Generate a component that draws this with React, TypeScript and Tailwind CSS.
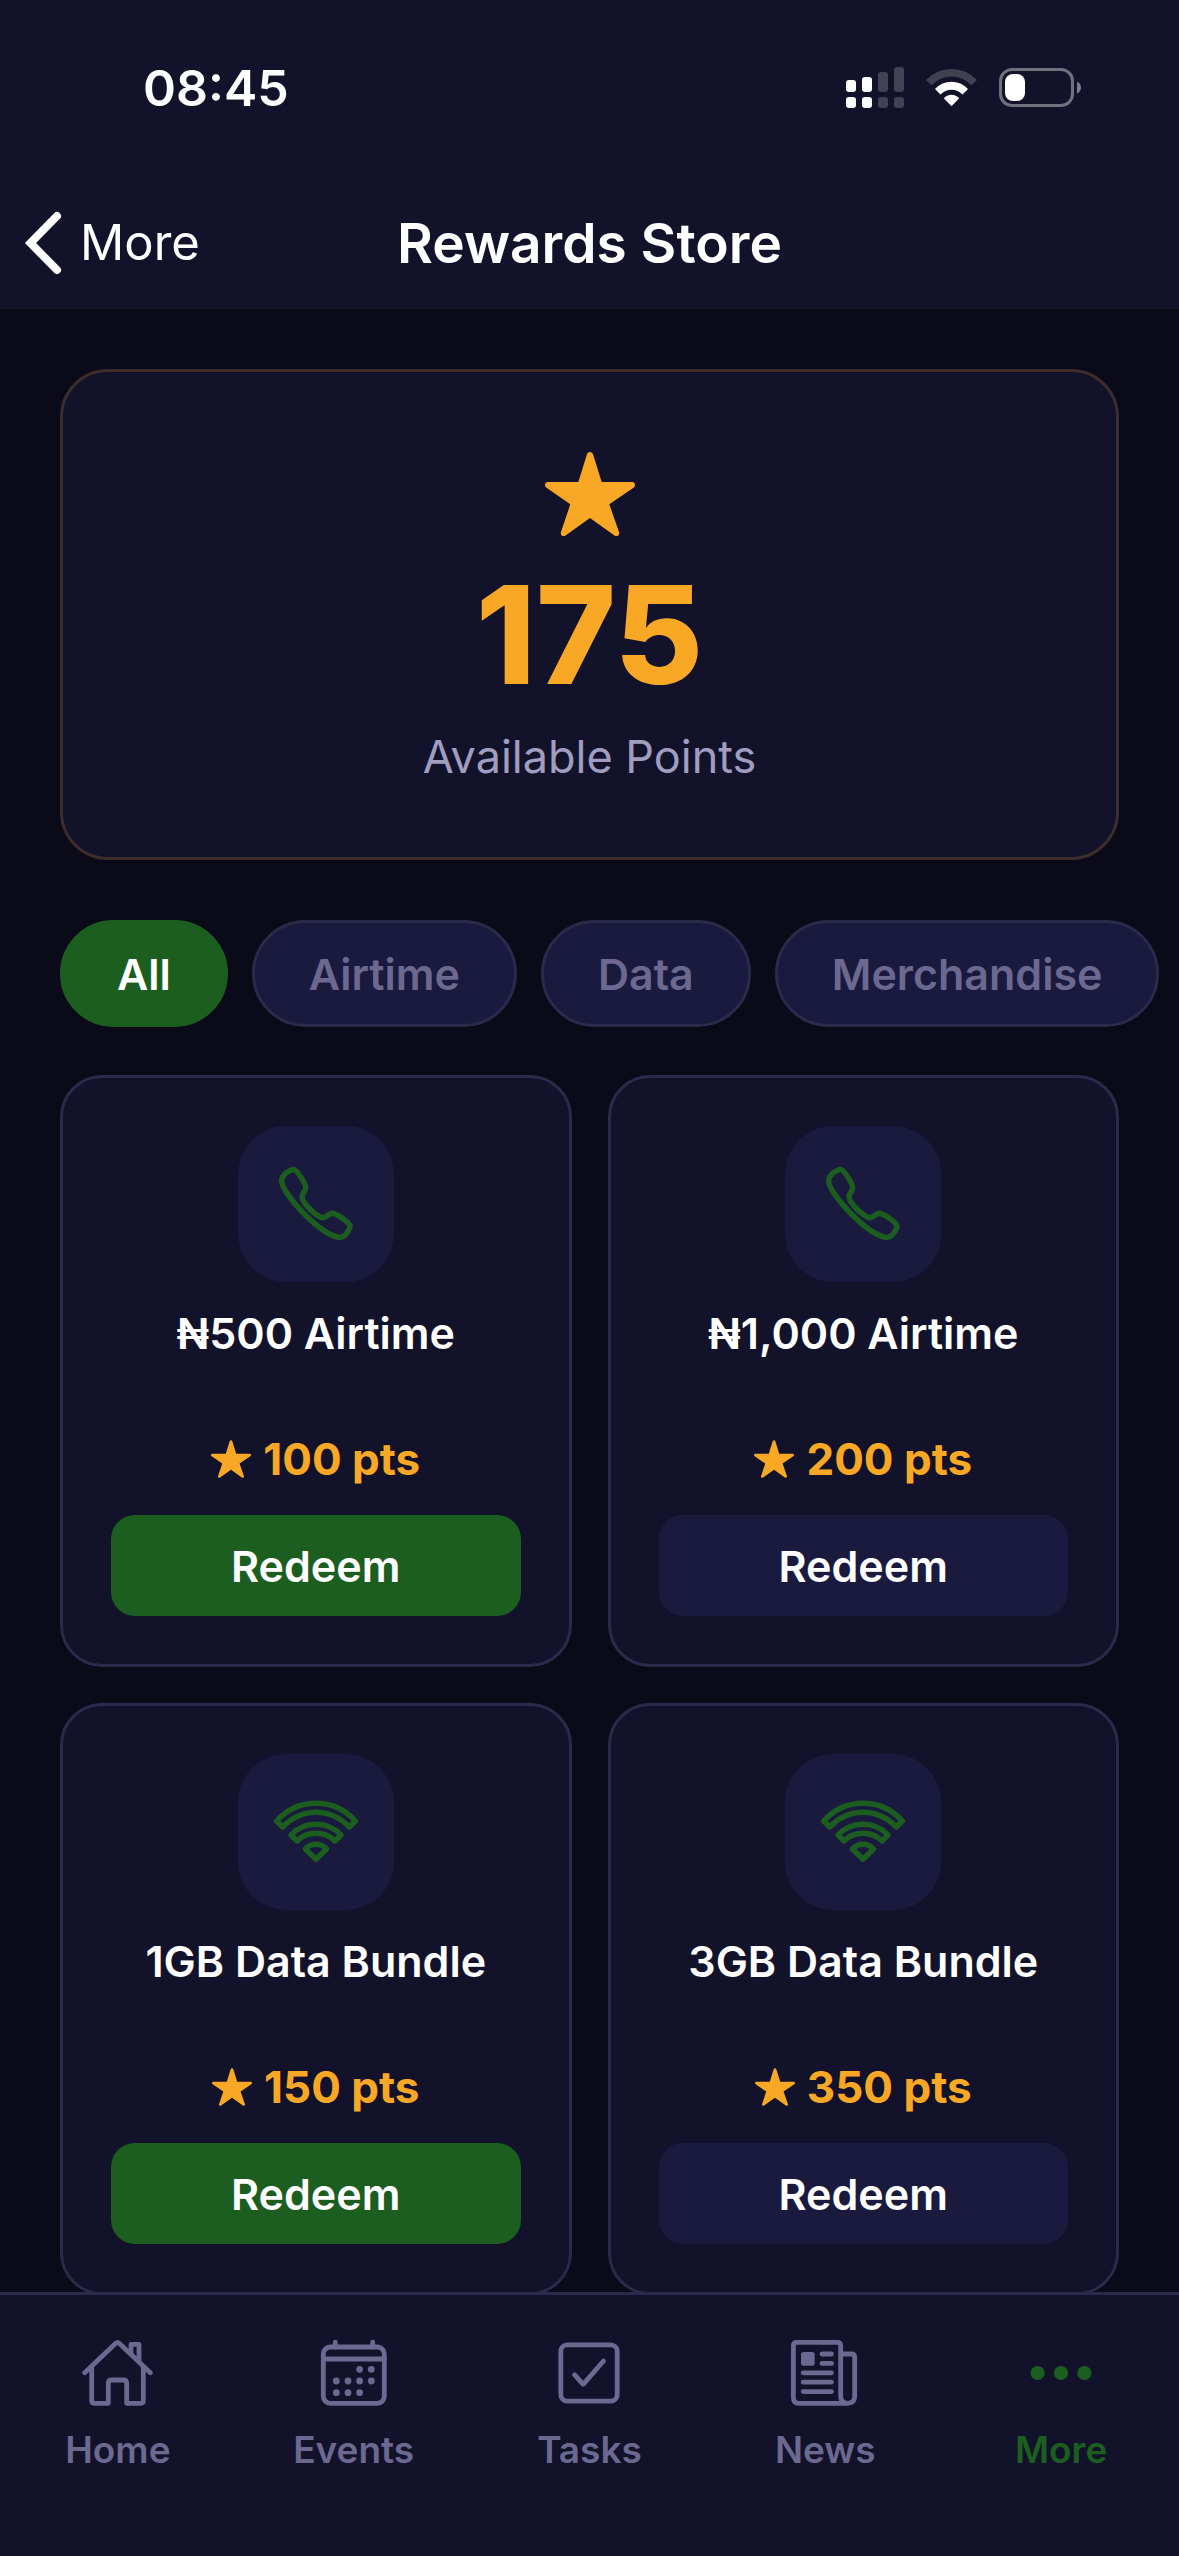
import React from 'react';

type IconName = 'phone' | 'wifi';

interface Reward {
  id: string;
  title: string;
  points: number;
  icon: IconName;
}

const AVAILABLE_POINTS = 175;

const categories = ['All', 'Airtime', 'Data', 'Merchandise'];

const rewards: Reward[] = [
  { id: 'airtime-500', title: '₦500 Airtime', points: 100, icon: 'phone' },
  { id: 'airtime-1000', title: '₦1,000 Airtime', points: 200, icon: 'phone' },
  { id: 'data-1gb', title: '1GB Data Bundle', points: 150, icon: 'wifi' },
  { id: 'data-3gb', title: '3GB Data Bundle', points: 350, icon: 'wifi' },
];

const StarIcon: React.FC<{ className: string }> = ({ className }) => (
  <svg viewBox="0 0 90 84" className={className} fill="currentColor" aria-hidden="true">
    <path d="M42 2.2C43-.7 47-.7 48 2.2L56.7 30H87C90.3 30 91 34 88.5 35.8L64.3 52.3L74 80C75 83 72 85.3 69.5 83.5L45 66L20.5 83.5C18 85.3 15 83 16 80L25.3 52.3L1.5 35.8C-1 34-.3 30 3 30H33.3Z" />
  </svg>
);

const RewardIcon: React.FC<{ name: IconName }> = ({ name }) => (
  <svg
    viewBox="0 0 84 84"
    className="size-[84px] text-[#1b5e20]"
    fill="none"
    stroke="currentColor"
    strokeWidth="5.4"
    strokeLinejoin="round"
    aria-hidden="true"
  >
    {name === 'phone' ? (
      <path d="M19.3 7.3C15 8.5 7.7 12.5 7.7 19C8 32 46 72.5 65 75.4C71 76 74.5 69 76 65C77.5 61.5 63 51.6 58 51.3C55 51.3 52.5 55.7 49.3 55.7C43 55.7 28 41 28 34.5C28 31 32.3 28.5 31.7 25C31.2 21.5 23.5 8 19.3 7.3Z" />
    ) : (
      <>
        <path d="M2.7 31C13 19.5 27 13.3 42 13.3S71 19.5 81.3 31L75.3 37C66 27.5 54.5 22.3 42 22.3S18 27.5 8.7 37Z" />
        <path d="M17 45C23.5 38 32 34.3 42 34.3S60.5 38 67 45L61 51C56 46 49.5 43.3 42 43.3S28 46 23 51Z" />
        <path d="M31.3 59C34 56 37.5 54.3 42 54.3S50 56 52.7 59L42 69.3Z" />
      </>
    )}
  </svg>
);

const tabs = [
  {
    label: 'Home',
    icon: (
      <>
        <path d="M2.7 35.7L33.8 6.2Q35.5 4.6 37.2 6.2L68.3 35.7" />
        <path d="M9.7 29.7V63.8Q9.7 66.3 12.2 66.3H26.3V46.5Q26.3 43 29.8 43H41.2Q44.7 43 44.7 46.5V66.3H58.8Q61.3 66.3 61.3 63.8V29.7" />
        <path d="M49 17V7.3H57V24.7" />
      </>
    ),
  },
  {
    label: 'Events',
    icon: (
      <>
        <rect x="5.3" y="10" width="61" height="56.3" rx="7" />
        <path d="M5.3 22H66.3" />
        <path d="M17.3 5.2V10M54.7 5.2V10" />
        <g fill="currentColor" stroke="none">
          <circle cx="41.6" cy="32.3" r="3.4" />
          <circle cx="53.3" cy="32.3" r="3.4" />
          <circle cx="18.3" cy="44" r="3.4" />
          <circle cx="30" cy="44" r="3.4" />
          <circle cx="41.6" cy="44" r="3.4" />
          <circle cx="53.3" cy="44" r="3.4" />
          <circle cx="18.3" cy="55.7" r="3.4" />
          <circle cx="30" cy="55.7" r="3.4" />
          <circle cx="41.6" cy="55.7" r="3.4" />
        </g>
      </>
    ),
  },
  {
    label: 'Tasks',
    icon: (
      <>
        <rect x="7.8" y="7.8" width="56.4" height="56.4" rx="6.5" />
        <path d="M21.5 37.7L30.2 47.3L50.5 24" />
      </>
    ),
  },
  {
    label: 'News',
    icon: (
      <>
        <path d="M51.7 17H62.5Q65.7 17 65.7 20.2V59.3Q65.7 66.3 58.7 66.3H10Q4.4 66.3 4.4 60.5V8.5Q4.4 5.3 7.6 5.3H48.5Q51.7 5.3 51.7 8.5V59.3Q51.7 66.3 58.7 66.3" />
        <rect x="12" y="15" width="13.7" height="13.7" rx="2.5" fill="currentColor" stroke="none" />
        <path d="M33 17H42.5M33 26.4H42.5M14.2 35.8H42.5M14.2 45.2H42.5M14.2 54.6H42.5" />
      </>
    ),
  },
  {
    label: 'More',
    icon: (
      <g fill="currentColor" stroke="none">
        <circle cx="12.6" cy="36" r="7.1" />
        <circle cx="36" cy="36" r="7.1" />
        <circle cx="59.4" cy="36" r="7.1" />
      </g>
    ),
  },
];

const StatusBar: React.FC = () => (
  <div className="flex h-44 items-center justify-between pl-[143px] pr-[98px]">
    <span className="text-[50px] font-semibold leading-[60px]">08:45</span>
    <div className="flex items-center gap-[22px]">
      <svg width="58" height="42" viewBox="0 0 58 42" fill="currentColor" aria-hidden="true">
        <rect x="0" y="13" width="10" height="12" rx="3" />
        <rect x="16" y="10" width="10" height="15" rx="3" />
        <rect x="0" y="30" width="10" height="11" rx="3" />
        <rect x="16" y="30" width="10" height="11" rx="3" />
        <g opacity="0.2">
          <rect x="32" y="5" width="10" height="20" rx="3" />
          <rect x="48" y="0" width="10" height="25" rx="3" />
          <rect x="32" y="30" width="10" height="11" rx="3" />
          <rect x="48" y="30" width="10" height="11" rx="3" />
        </g>
      </svg>
      <svg width="51" height="42" viewBox="0 0 51 42" fill="currentColor" aria-hidden="true">
        <path opacity="0.2" d="M0 13Q11 2 25.5 2T51 13L45.5 18.3Q37 9.5 25.5 9.5T5.5 18.3Z" />
        <path d="M9 22Q16 14.8 25.5 14.8T42 22L36.5 27.5Q32 22.8 25.5 22.8T14.5 27.5Z" />
        <path d="M17.8 31.2Q21 27.7 25.5 27.7T33.2 31.2L26.2 38.6Q25.5 39.3 24.8 38.6Z" />
      </svg>
      <svg width="82" height="42" viewBox="0 0 82 42" fill="currentColor" aria-hidden="true">
        <rect x="1.5" y="2.5" width="72" height="36" rx="11.5" fill="none" stroke="currentColor" strokeWidth="3" opacity="0.4" />
        <rect x="6" y="7" width="20" height="27" rx="8" />
        <path opacity="0.45" d="M78 14.5Q82 16.5 82 20.5T78 26.5Z" />
      </svg>
    </div>
  </div>
);

const Header: React.FC = () => (
  <div className="grid h-[133px] grid-cols-[1fr_auto_1fr] items-center">
    <button type="button" className="flex items-center gap-[18px] pl-[24px] text-[49px] leading-[60px]">
      <svg width="38" height="64" viewBox="0 0 38 64" fill="none" stroke="currentColor" strokeWidth="8" strokeLinecap="round" strokeLinejoin="miter" aria-hidden="true">
        <path d="M33 5L6.5 32L33 59" />
      </svg>
      More
    </button>
    <h1 className="text-[55px] font-semibold leading-[66px]">Rewards Store</h1>
  </div>
);

const RewardCard: React.FC<{ reward: Reward }> = ({ reward }) => {
  const affordable = reward.points <= AVAILABLE_POINTS;

  return (
    <article className="flex flex-col items-center rounded-[42px] border-[3px] border-[#2a2a4a] bg-[#12122a] p-12">
      <div className="flex size-[156px] items-center justify-center rounded-[48px] bg-[#1a1a3e]">
        <RewardIcon name={reward.icon} />
      </div>
      <h2 className="mt-6 min-h-[108px] text-center text-[43px] font-semibold leading-[54px]">{reward.title}</h2>
      <div className="mt-[18px] flex items-center gap-3 text-[44px] font-bold leading-[54px] text-[#f9a825]">
        <StarIcon className="h-[38px] w-[40px]" />
        <span>{reward.points} pts</span>
      </div>
      <button
        type="button"
        className={`mt-[29px] h-[101px] w-full rounded-[24px] text-[43px] font-semibold leading-[54px] ${
          affordable ? 'bg-[#1b5e20]' : 'bg-[#1a1a3e]'
        }`}
      >
        Redeem
      </button>
    </article>
  );
};

const App: React.FC = () => {
  return (
    <div className="flex h-screen flex-col bg-[#0a0a18] font-['Inter',sans-serif] text-white">
      <header className="shrink-0 bg-[#12122a]">
        <StatusBar />
        <Header />
      </header>

      <main className="min-h-0 flex-1 overflow-y-auto pt-[60px] [scrollbar-width:none]">
        {/* Points balance */}
        <section className="mx-[60px] flex flex-col items-center rounded-[48px] border-[3px] border-[#3d2e2c] bg-[#12122a] pb-[70px] pt-20">
          <StarIcon className="h-[84px] w-[90px] text-[#f9a825]" />
          <p className="mt-[27px] text-[136px] font-extrabold leading-[144px] text-[#f9a825]">{AVAILABLE_POINTS}</p>
          <p className="mt-5 text-[45px] leading-[60px] text-[#a09dc0]">Available Points</p>
        </section>

        {/* Category filter */}
        <div className="mt-[60px] flex gap-6 overflow-x-auto pl-[60px] [scrollbar-width:none]">
          {categories.map((category, i) => (
            <button
              key={category}
              type="button"
              aria-pressed={i === 0}
              className={`h-[107px] shrink-0 rounded-full border-[3px] px-[54px] text-[43px] font-semibold leading-[54px] ${
                i === 0
                  ? 'border-[#1b5e20] bg-[#1b5e20] text-white'
                  : 'border-[#2a2a4a] bg-[#1a1a3e] text-[#6b6990]'
              }`}
            >
              {category}
            </button>
          ))}
        </div>

        {/* Rewards */}
        <div className="mt-12 grid grid-cols-2 gap-9 px-[60px]">
          {rewards.map((reward) => (
            <RewardCard key={reward.id} reward={reward} />
          ))}
        </div>
      </main>

      <nav className="grid shrink-0 grid-cols-5 border-t-[3px] border-[#2a2a4a] bg-[#12122a] pb-[82px] pt-[42px]">
        {tabs.map((tab) => (
          <a
            key={tab.label}
            href="#"
            className={`flex flex-col items-center gap-[17px] ${tab.label === 'More' ? 'text-[#1b5e20]' : 'text-[#6b6990]'}`}
          >
            <svg
              viewBox="0 0 72 72"
              className="size-[72px]"
              fill="none"
              stroke="currentColor"
              strokeWidth="4.8"
              strokeLinecap="round"
              strokeLinejoin="round"
              aria-hidden="true"
            >
              {tab.icon}
            </svg>
            <span className="text-[37px] font-semibold leading-[48px]">{tab.label}</span>
          </a>
        ))}
      </nav>
    </div>
  );
};

export default App;
